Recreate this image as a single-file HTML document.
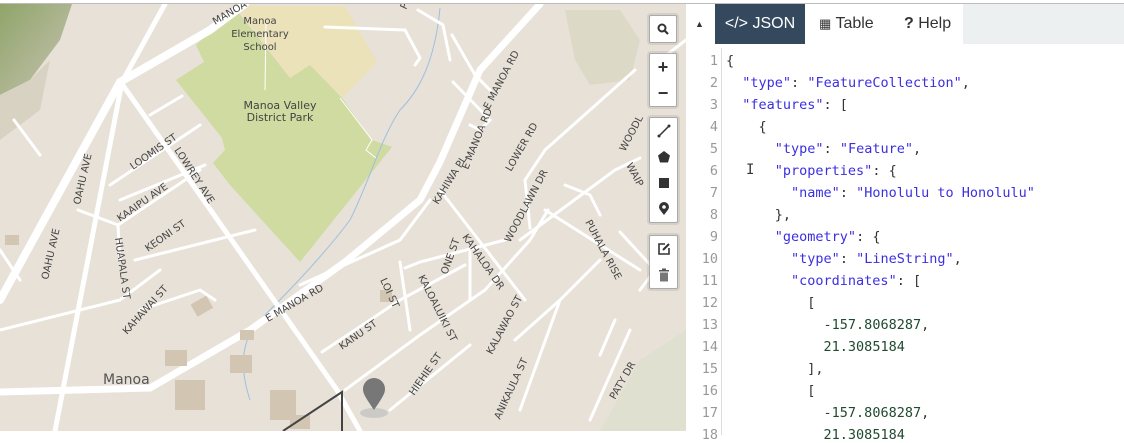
<!DOCTYPE html>
<html><head><meta charset="utf-8"><style>
html,body{margin:0;padding:0;width:1124px;height:431px;overflow:hidden;background:#fff;font-family:"Liberation Sans",sans-serif}
#map{position:absolute;left:0;top:4px;width:686px;height:427px;background:#e7e1d8;overflow:hidden}
#topline{position:absolute;left:0;top:3px;width:1124px;height:1px;background:#bbb}
.ctl{position:absolute;background:#fff;border:1px solid #aaa;border-radius:2px;box-shadow:0 0 0 2px rgba(0,0,0,0.08)}
.ctl div{height:26px;display:flex;align-items:center;justify-content:center;color:#333;font-weight:bold;font-size:16px}
#panel{position:absolute;left:686px;top:4px;width:438px;height:427px;background:#fff}
#tabs{position:absolute;left:0;top:0;width:438px;height:40px;background:#fff}
#tabs .gray{position:absolute;left:277px;top:0;width:161px;height:40px;background:#ecf0f1}
.tab{position:absolute;top:0;height:40px;line-height:40px;font-size:16px;color:#333}
#code{position:absolute;left:0;top:49px;font-family:"DejaVu Sans Mono","Liberation Mono",monospace;font-size:13.5px}
.ln{position:absolute;left:0;width:32px;text-align:right;color:#999}
.tx{position:absolute;left:40px;white-space:pre;color:#333}
.k{color:#3b2fe0}.n{color:#1f4a2e}
#gut{position:absolute;left:35px;top:44px;width:1px;height:387px;background:#ddd}
</style></head><body>
<div id="map">
<svg width="686" height="427" viewBox="0 4 686 427" xmlns="http://www.w3.org/2000/svg" font-family="DejaVu Sans, Liberation Sans, sans-serif">
<defs><linearGradient id="g1" x1="0" y1="0" x2="1" y2="1"><stop offset="0" stop-color="#8fa56a"/><stop offset="1" stop-color="#c9c3b3"/></linearGradient></defs>
<path d="M0,4 L72,4 L60,40 L30,80 L0,95Z" fill="url(#g1)"/>
<path d="M0,95 L30,80 L50,60 L40,110 L0,140Z" fill="#d8d2c3"/>
<path d="M565,10 L620,10 L640,40 L630,80 L590,85 L575,60Z" fill="#dcd9c6"/>
<path d="M640,360 L686,330 L686,431 L600,431Z" fill="#dfe0d0"/>
<path d="M235,6 L345,6 L377,62 L342,98 L310,65 L290,78Z" fill="#ebe2b9"/>
<path d="M176,80 L204,62 L196,45 L235,8 L290,78 L310,65 L342,98 L372,140 L392,147 L300,262 L230,185 L213,163 L225,150 L222,138Z" fill="#cfdba0"/>
<path d="M340,98 L372,140 L366,150 L376,158" stroke="#fff" stroke-width="1" fill="none"/>
<path d="M266,22 L265,90" stroke="#fff" stroke-width="1" fill="none"/>
<path d="M440,8 C435,60 420,90 400,110 C380,140 370,180 350,220 C320,260 280,300 260,320 C240,340 240,370 250,400" stroke="#9fbfe0" stroke-width="1" fill="none"/>
<g stroke="#fff" stroke-linecap="round" fill="none">
<path d="M0,300 L120,82 L210,30 L245,4" stroke-width="8"/>
<path d="M55,431 L122,82 L165,4" stroke-width="5"/>
<path d="M0,392 L150,388 L250,330 L345,262 L420,200 L440,162 L480,70 L540,4" stroke-width="7"/>
<path d="M122,84 L337,390 L360,431" stroke-width="5"/>
<path d="M14,120 L40,155" stroke-width="3"/>
<path d="M150,115 L182,96" stroke-width="3"/>
<path d="M110,185 L200,125" stroke-width="3"/>
<path d="M120,200 L205,165" stroke-width="3"/>
<path d="M78,210 L118,225 L200,170" stroke-width="3"/>
<path d="M118,225 L120,260" stroke-width="3"/>
<path d="M135,260 L255,230" stroke-width="3"/>
<path d="M0,250 L20,280" stroke-width="3"/>
<path d="M0,330 L120,300 L160,270" stroke-width="3"/>
<path d="M140,310 L200,290 L215,300" stroke-width="3"/>
<path d="M300,285 L400,240 L430,200" stroke-width="3"/>
<path d="M405,268 L420,262 L505,240" stroke-width="3"/>
<path d="M322,352 L400,300 L465,265" stroke-width="3"/>
<path d="M345,390 L420,335 L485,290 L530,240 L548,210" stroke-width="3"/>
<path d="M400,262 L410,330" stroke-width="3"/>
<path d="M440,190 L525,300" stroke-width="3"/>
<path d="M470,252 L470,300" stroke-width="3"/>
<path d="M390,410 L470,345" stroke-width="3"/>
<path d="M520,240 L615,170 L640,158" stroke-width="3"/>
<path d="M530,228 L525,180 L545,150 L635,70" stroke-width="3"/>
<path d="M565,185 L590,195 L600,215" stroke-width="3"/>
<path d="M545,210 L640,270" stroke-width="3"/>
<path d="M620,232 L655,270 L640,290" stroke-width="3"/>
<path d="M515,340 L560,300 L520,410" stroke-width="3"/>
<path d="M560,300 L600,260" stroke-width="3"/>
<path d="M615,320 L600,355" stroke-width="3"/>
<path d="M630,330 L590,420" stroke-width="3"/>
<path d="M418,10 L443,25 L450,60" stroke-width="3"/>
<path d="M452,35 L475,75 L490,90" stroke-width="3"/>
<path d="M453,82 L490,120 L480,130 L470,125" stroke-width="3"/>
<path d="M325,27 L405,30 L420,58 L415,65" stroke-width="3"/>
<path d="M660,60 L686,40" stroke-width="3"/>
</g>
<g fill="#d2c6b3">
<rect x="192" y="300" width="18" height="14" transform="rotate(-30 200 305)"/>
<rect x="165" y="350" width="22" height="16"/>
<rect x="175" y="380" width="30" height="30"/>
<rect x="230" y="355" width="22" height="18"/>
<rect x="270" y="390" width="26" height="30"/>
<rect x="290" y="415" width="20" height="14"/>
<rect x="380" y="290" width="12" height="12"/>
<rect x="240" y="330" width="14" height="10"/>
<rect x="5" y="235" width="14" height="10"/>
</g>
<path d="M283,431 L342,392 L342,431" stroke="#444" stroke-width="2" fill="none"/>
<ellipse cx="374" cy="413" rx="14" ry="5" fill="#bbb" opacity="0.6"/>
<path d="M374,410 C366,398 363,394 363,389 A11,11 0 1 1 385,389 C385,394 382,398 374,410Z" fill="#777"/>
<g fill="#444" font-size="10">
<text x="260" y="24" text-anchor="middle">Manoa</text>
<text x="260" y="37" text-anchor="middle">Elementary</text>
<text x="260" y="50" text-anchor="middle">School</text>
<text x="280" y="109" font-size="11" text-anchor="middle">Manoa Valley</text>
<text x="280" y="121" font-size="11" text-anchor="middle">District Park</text>
<text x="103" y="384" font-size="14" fill="#555">Manoa</text>
<text transform="translate(215,25) rotate(-30)">MANOA</text>
<text transform="translate(468,170) rotate(-68)">E MANOA RD</text>
<text transform="translate(489,110) rotate(-62)">E MANOA RD</text>
<text transform="translate(268,322) rotate(-30)">E MANOA RD</text>
<text transform="translate(80,205) rotate(-77)">OAHU AVE</text>
<text transform="translate(48,280) rotate(-77)">OAHU AVE</text>
<text transform="translate(133,170) rotate(-35)">LOOMIS ST</text>
<text transform="translate(174,150) rotate(57)">LOWREY AVE</text>
<text transform="translate(120,222) rotate(-35)">KAAIPU AVE</text>
<text transform="translate(148,252) rotate(-35)">KEONI ST</text>
<text transform="translate(115,238) rotate(82)">HUAPALA ST</text>
<text transform="translate(127,335) rotate(-48)">KAHAWAI ST</text>
<text transform="translate(438,205) rotate(-58)">KAHIWA PL</text>
<text transform="translate(511,172) rotate(-60)">LOWER RD</text>
<text transform="translate(510,243) rotate(-62)">WOODLAWN DR</text>
<text transform="translate(625,152) rotate(-62)">WOODL</text>
<text transform="translate(626,165) rotate(62)">WAIP</text>
<text transform="translate(585,222) rotate(62)">PUHALA RISE</text>
<text transform="translate(447,275) rotate(-70)">ONE ST</text>
<text transform="translate(462,237) rotate(55)">KAHALOA DR</text>
<text transform="translate(380,280) rotate(65)">LOI ST</text>
<text transform="translate(342,350) rotate(-35)">KANU ST</text>
<text transform="translate(418,277) rotate(63)">KALOALUIKI ST</text>
<text transform="translate(492,355) rotate(-62)">KALAWAO ST</text>
<text transform="translate(414,396) rotate(-55)">HIEHIE ST</text>
<text transform="translate(615,400) rotate(-60)">PATY DR</text>
<text transform="translate(406,10) rotate(-65)">POEL</text>
<text transform="translate(500,420) rotate(-65)">ANIKAULA ST</text>
</g>
</svg>
<div class="ctl" style="left:649px;top:11px;width:26px"><div><svg width="12" height="12" viewBox="0 0 12 12"><circle cx="5" cy="5" r="3.5" stroke="#333" stroke-width="2" fill="none"/><path d="M7.5,7.5 L11,11" stroke="#333" stroke-width="2.2"/></svg></div></div>
<div class="ctl" style="left:649px;top:49px;width:26px"><div style="font-size:18px">+</div><div style="font-size:18px">−</div></div>
<div class="ctl" style="left:649px;top:113px;width:27px">
<div><svg width="14" height="14"><path d="M2,12 L12,2" stroke="#333" stroke-width="1.5"/><circle cx="2" cy="12" r="1.5" fill="#333"/><circle cx="12" cy="2" r="1.5" fill="#333"/></svg></div>
<div><svg width="14" height="14"><path d="M7,1 L13,5.5 L11,12.5 L3,12.5 L1,5.5Z" fill="#333"/></svg></div>
<div><svg width="14" height="14"><rect x="2" y="2" width="10" height="10" fill="#333"/></svg></div>
<div><svg width="12" height="14"><path d="M6,13 C3,9 1,7 1,5 A5,5 0 1 1 11,5 C11,7 9,9 6,13Z" fill="#333"/><circle cx="6" cy="5" r="1.8" fill="#fff"/></svg></div>
</div>
<div class="ctl" style="left:649px;top:231px;width:27px">
<div><svg width="14" height="14"><path d="M8,2 L2,2 L2,12 L12,12 L12,6" stroke="#333" stroke-width="1.6" fill="none"/><path d="M6,8 L12,2" stroke="#333" stroke-width="2"/></svg></div>
<div><svg width="12" height="14"><rect x="1" y="2" width="10" height="1.5" fill="#555"/><rect x="4" y="0.5" width="4" height="1.5" fill="#555"/><rect x="2" y="4.5" width="8" height="9" fill="#777"/></svg></div>
</div>
</div>
<div id="topline"></div>
<div id="panel">
<div id="tabs">
<div class="gray"></div>
<div class="tab" style="left:9px;font-size:9px;color:#333">▲</div>
<div class="tab" style="left:29px;width:90px;background:#34495e;color:#fff;text-align:center">&lt;/&gt; JSON</div>
<div class="tab" style="left:133px"><span style="font-size:13px">▦</span> Table</div>
<div class="tab" style="left:218px"><b>?</b> Help</div>
</div>
<div id="gut"></div>
<div id="code">
<div class="ln" style="top:0">1</div><div class="tx" style="top:0">{</div>
<div class="ln" style="top:22px">2</div><div class="tx" style="top:22px">  <span class="k">"type"</span>: <span class="k">"FeatureCollection"</span>,</div>
<div class="ln" style="top:44px">3</div><div class="tx" style="top:44px">  <span class="k">"features"</span>: [</div>
<div class="ln" style="top:66px">4</div><div class="tx" style="top:66px">    {</div>
<div class="ln" style="top:88px">5</div><div class="tx" style="top:88px">      <span class="k">"type"</span>: <span class="k">"Feature"</span>,</div>
<div class="ln" style="top:110px">6</div><div class="tx" style="top:110px">      <span class="k">"properties"</span>: {</div>
<div class="ln" style="top:132px">7</div><div class="tx" style="top:132px">        <span class="k">"name"</span>: <span class="k">"Honolulu to Honolulu"</span></div>
<div class="ln" style="top:154px">8</div><div class="tx" style="top:154px">      },</div>
<div class="ln" style="top:176px">9</div><div class="tx" style="top:176px">      <span class="k">"geometry"</span>: {</div>
<div class="ln" style="top:198px">10</div><div class="tx" style="top:198px">        <span class="k">"type"</span>: <span class="k">"LineString"</span>,</div>
<div class="ln" style="top:220px">11</div><div class="tx" style="top:220px">        <span class="k">"coordinates"</span>: [</div>
<div class="ln" style="top:242px">12</div><div class="tx" style="top:242px">          [</div>
<div class="ln" style="top:264px">13</div><div class="tx" style="top:264px">            <span class="n">-157.8068287</span>,</div>
<div class="ln" style="top:286px">14</div><div class="tx" style="top:286px">            <span class="n">21.3085184</span></div>
<div class="ln" style="top:308px">15</div><div class="tx" style="top:308px">          ],</div>
<div class="ln" style="top:330px">16</div><div class="tx" style="top:330px">          [</div>
<div class="ln" style="top:352px">17</div><div class="tx" style="top:352px">            <span class="n">-157.8068287</span>,</div>
<div class="ln" style="top:374px">18</div><div class="tx" style="top:374px">            <span class="n">21.3085184</span></div>
</div>
<div style="position:absolute;left:60px;top:158px;font-family:'DejaVu Sans Mono',monospace;font-size:14px;color:#333">I</div>
</div>
</body></html>
